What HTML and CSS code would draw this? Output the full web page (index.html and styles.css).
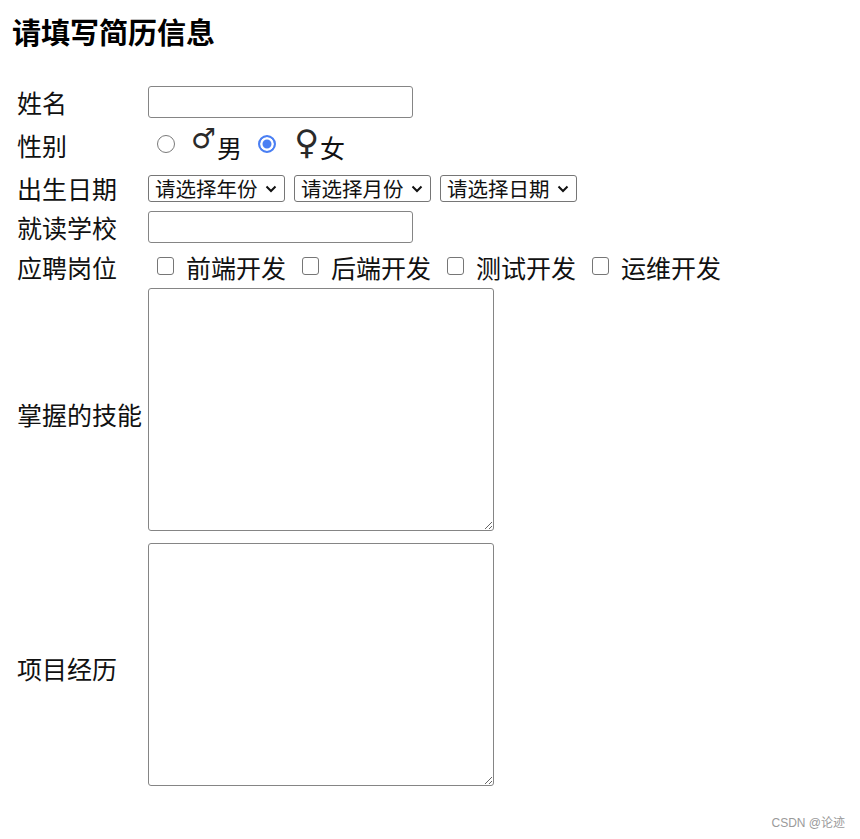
FILE: index.html
```html
<!DOCTYPE html>
<html lang="zh-CN">
<head>
<meta charset="utf-8">
<title>简历</title>
<link rel="stylesheet" href="styles.css">
</head>
<body>
<h3 class="title">请填写简历信息</h3>
<form class="form">
  <div class="row row-name">
    <span class="label">姓名</span>
    <div class="ctrl"><input class="text-input" type="text"></div>
  </div>
  <div class="row row-gender">
    <span class="label">性别</span>
    <div class="ctrl choices">
      <input class="radio" type="radio" name="sex">
      <span class="sym sym-male">♂</span><span class="opt-text">男</span>
      <input class="radio radio-second" type="radio" name="sex" checked>
      <span class="sym sym-female">♀</span><span class="opt-text">女</span>
    </div>
  </div>
  <div class="row row-birth">
    <span class="label">出生日期</span>
    <div class="ctrl selects">
      <span class="sel"><select><option>请选择年份</option></select><svg class="chev" viewBox="0 0 12 8" width="12" height="8"><path d="M1.5 1.5 L6 6 L10.5 1.5" fill="none" stroke="#111" stroke-width="2"/></svg></span>
      <span class="sel"><select><option>请选择月份</option></select><svg class="chev" viewBox="0 0 12 8" width="12" height="8"><path d="M1.5 1.5 L6 6 L10.5 1.5" fill="none" stroke="#111" stroke-width="2"/></svg></span>
      <span class="sel"><select><option>请选择日期</option></select><svg class="chev" viewBox="0 0 12 8" width="12" height="8"><path d="M1.5 1.5 L6 6 L10.5 1.5" fill="none" stroke="#111" stroke-width="2"/></svg></span>
    </div>
  </div>
  <div class="row row-school">
    <span class="label">就读学校</span>
    <div class="ctrl"><input class="text-input" type="text"></div>
  </div>
  <div class="row row-job">
    <span class="label">应聘岗位</span>
    <div class="ctrl checks">
      <label class="check"><input class="checkbox" type="checkbox"><span>前端开发</span></label>
      <label class="check"><input class="checkbox" type="checkbox"><span>后端开发</span></label>
      <label class="check"><input class="checkbox" type="checkbox"><span>测试开发</span></label>
      <label class="check"><input class="checkbox" type="checkbox"><span>运维开发</span></label>
    </div>
  </div>
  <div class="row row-skill">
    <span class="label">掌握的技能</span>
    <div class="ctrl"><textarea class="area area-skill"></textarea></div>
  </div>
  <div class="row row-project">
    <span class="label">项目经历</span>
    <div class="ctrl"><textarea class="area area-project"></textarea></div>
  </div>
</form>
<div class="watermark">CSDN @论迹</div>
</body>
</html>
```

FILE: styles.css
```css
html, body {
  margin: 0;
  padding: 0;
  background: #ffffff;
}

body {
  font-family: "Noto Sans CJK SC", "Noto Sans", sans-serif;
  color: #111111;
  width: 860px;
  height: 839px;
  overflow: hidden;
}

.title {
  margin: 17px 0 0 12px;
  font-size: 29px;
  line-height: 29px;
  font-weight: 700;
  color: #000;
}

.form {
  margin-top: 38px;
  padding-left: 17px;
  display: flex;
  flex-direction: column;
}

.row {
  display: grid;
  grid-template-columns: 131px auto;
  align-items: center;
}

.label {
  font-size: 25px;
  line-height: 32px;
  white-space: nowrap;
}

.ctrl {
  display: flex;
  align-items: center;
}

.row-name { height: 36px; }
.row-gender { height: 50px; }
.row-birth { height: 36px; }
.row-school { height: 42px; }
.row-job { height: 38px; }
.row-skill { height: 254px; }
.row-project { height: 255px; }

.text-input {
  box-sizing: border-box;
  width: 265px;
  height: 32px;
  border: 1px solid #858585;
  border-radius: 3px;
  margin: 0;
  padding: 0 4px;
  background: #fff;
  font-size: 20px;
}

/* gender */
.choices {
  font-size: 25px;
  line-height: 32px;
}

.radio {
  appearance: none;
  -webkit-appearance: none;
  box-sizing: border-box;
  width: 18px;
  height: 18px;
  margin: 0 0 0 9px;
  border: 1.5px solid #7a7a7a;
  border-radius: 50%;
  background: #fff;
  flex: none;
  position: relative;
  top: -1px;
}

.radio:checked {
  border: 2px solid #4a7ff3;
  background: #4a7ff3;
  box-shadow: inset 0 0 0 2.5px #fff;
}

.radio-second {
  margin-left: 16px;
}

.sym {
  font-family: "DejaVu Sans", sans-serif;
  line-height: 32px;
  color: #2a2a2a;
}

.sym-male {
  font-size: 28px;
  margin-left: 16px;
  position: relative;
  top: -6px;
}

.sym-female {
  font-size: 34px;
  margin-left: 18px;
  position: relative;
  top: -3px;
}

.opt-text {
  margin-left: 1px;
  position: relative;
  top: 2px;
}

/* selects */
.selects {
  gap: 9px;
}

.sel {
  position: relative;
  display: inline-block;
  height: 27px;
}

.sel select {
  appearance: none;
  -webkit-appearance: none;
  box-sizing: border-box;
  width: 137px;
  height: 27px;
  margin: 0;
  padding: 0 0 0 6px;
  border: 1px solid #767676;
  border-radius: 3px;
  background: #fff;
  color: #111;
  font-family: "Noto Sans CJK SC", sans-serif;
  font-size: 20.5px;
  line-height: 25px;
}

.chev {
  position: absolute;
  right: 8px;
  top: 10px;
  pointer-events: none;
}

/* checkboxes */
.checks {
  font-size: 25px;
  line-height: 32px;
}

.check {
  display: flex;
  align-items: center;
  margin-right: 16px;
}

.check:first-child {
  margin-left: 9px;
}

.checkbox {
  appearance: none;
  -webkit-appearance: none;
  box-sizing: border-box;
  width: 17px;
  height: 18px;
  margin: 0 12px 0 0;
  border: 1.5px solid #767676;
  border-radius: 3px;
  background: #fff;
  flex: none;
  position: relative;
  top: -1px;
}

/* textareas */
.area {
  box-sizing: border-box;
  width: 346px;
  height: 243px;
  margin: 0;
  border: 1px solid #858585;
  border-radius: 3px;
  resize: both;
  background: #fff;
  font-size: 20px;
}

.area-skill { margin: 2px 0 10px; }
.area-project { margin: 3px 0 10px; }

.watermark {
  text-align: right;
  padding-right: 15px;
  margin-top: 20px;
  font-family: "Liberation Sans", sans-serif;
  font-size: 12px;
  line-height: 16px;
  color: #9a9a9a;
}
```
